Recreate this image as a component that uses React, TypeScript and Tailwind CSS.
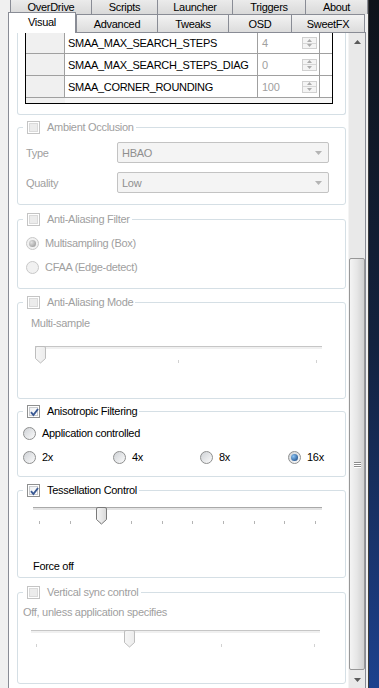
import React from 'react';

const DIS = 'text-[#a0a0a0]';

type Opt = { checked?: boolean; disabled?: boolean };

const Check = ({ checked = false, disabled = false }: Opt) => (
  <span
    className={`relative flex h-[13px] w-[13px] shrink-0 items-center justify-center border bg-white ${
      disabled ? 'border-[#c4c4c4]' : 'border-[#8e8f8f]'
    }`}
  >
    <span
      className={`h-[9px] w-[9px] border ${
        disabled
          ? 'border-[#dadada] bg-[#ececec]'
          : checked
          ? 'border-[#c9cbce] bg-gradient-to-br from-[#eef0f2] to-white'
          : 'border-[#b5b7ba] bg-gradient-to-br from-[#dcdee1] to-[#fafafa]'
      }`}
    />
    {checked && (
      <svg className="absolute left-[1px] top-[1px]" width="11" height="11" viewBox="0 0 11 11">
        <path d="M2 5.2 L4.4 8 L9 2" fill="none" stroke="#3b5a94" strokeWidth="1.9" />
      </svg>
    )}
  </span>
);

const Radio = ({ checked = false, disabled = false }: Opt) => (
  <span
    className={`flex h-[13px] w-[13px] shrink-0 items-center justify-center rounded-full border ${
      disabled
        ? 'border-[#c8c8c8] bg-[#f1f1f1]'
        : 'border-[#8e8f8f] bg-gradient-to-br from-[#cfd2d6] to-[#fbfbfb]'
    }`}
  >
    {checked && (
      <span
        className={`h-[7px] w-[7px] rounded-full ${
          disabled
            ? 'bg-[radial-gradient(circle_at_35%_35%,#e2e2e2,#8e8e8e)]'
            : 'bg-[radial-gradient(circle_at_35%_35%,#8cc4f4,#0b3a78)]'
        }`}
      />
    )}
  </span>
);

const Combo = ({ value }: { value: string }) => (
  <div className="flex h-[21px] w-[212px] items-center justify-between rounded-[2px] border border-[#c3c3c3] bg-[#f4f4f4] pl-[4px] pr-[6px] text-[#8f8f8f]">
    <span>{value}</span>
    <svg width="7" height="4" viewBox="0 0 7 4">
      <path d="M0 0H7L3.5 4Z" fill="#b4b4b4" />
    </svg>
  </div>
);

const Spin = () => (
  <div className="flex h-[12px] w-[15px] flex-col border border-[#d0d0d0] bg-[#f4f4f4]">
    <div className="flex flex-1 items-center justify-center border-b border-[#d6d6d6]">
      <svg width="5" height="3" viewBox="0 0 5 3">
        <path d="M0 3H5L2.5 0Z" fill="#ababab" />
      </svg>
    </div>
    <div className="flex flex-1 items-center justify-center">
      <svg width="5" height="3" viewBox="0 0 5 3">
        <path d="M0 0H5L2.5 3Z" fill="#ababab" />
      </svg>
    </div>
  </div>
);

type SliderProps = {
  width: number;
  cls: string;
  value: number;
  steps: number;
  pad: number;
  disabled?: boolean;
};

// thumb is placed from the value, ticks spread between the pads
const Slider = ({ width, cls, value, steps, pad, disabled = false }: SliderProps) => {
  const left = pad + ((width - 2 * pad) * value) / (steps - 1) - 5;
  return (
    <div className={`relative h-[23px] ${cls}`}>
      <div
        className={`mt-[6px] h-[3px] border-t ${
          disabled ? 'border-[#c6c6c6] bg-[#f0f0f0]' : 'border-[#a9a9a9] bg-[#e4e4e4]'
        }`}
      />
      <div className="mt-[11px] flex h-[3px] justify-between" style={{ paddingLeft: pad, paddingRight: pad }}>
        {Array.from({ length: steps }).map((_, i) => (
          <span key={i} className={`w-[1px] ${disabled ? 'bg-[#d2d2d2]' : 'bg-[#b4b4b4]'}`} />
        ))}
      </div>
      <svg className="absolute top-0" style={{ left }} width="11" height="18" viewBox="0 0 11 18">
        <defs>
          <linearGradient id={disabled ? 'thd' : 'the'} x1="0" y1="0" x2="1" y2="0">
            <stop offset="0" stopColor={disabled ? '#f6f6f6' : '#f7f7f7'} />
            <stop offset="1" stopColor={disabled ? '#ececec' : '#d9d9d9'} />
          </linearGradient>
        </defs>
        <path
          d="M0.5 2 Q0.5 0.5 2 0.5 H9 Q10.5 0.5 10.5 2 V12.5 L5.5 17 L0.5 12.5 Z"
          fill={`url(#${disabled ? 'thd' : 'the'})`}
          stroke={disabled ? '#bdbdbd' : '#7a7a7a'}
        />
      </svg>
    </div>
  );
};

type GroupProps = {
  title: string;
  checked?: boolean;
  disabled?: boolean;
  cls: string;
  children?: React.ReactNode;
};

const Group = ({ title, checked = false, disabled = false, cls, children }: GroupProps) => (
  <div className={`ml-[8px] w-[329px] shrink-0 rounded-[3px] border border-[#d5dfe5] ${cls}`}>
    <div
      className={`-mt-[8px] ml-[5px] flex h-[14px] w-fit items-center gap-[7px] bg-white pl-[4px] pr-[2px] ${
        disabled ? DIS : 'text-black'
      }`}
    >
      <Check checked={checked} disabled={disabled} />
      <span>{title}</span>
    </div>
    {children}
  </div>
);

const rows = [
  { name: 'SMAA_MAX_SEARCH_STEPS', value: '4', h: 'h-[21px]' },
  { name: 'SMAA_MAX_SEARCH_STEPS_DIAG', value: '0', h: 'h-[22px]' },
  { name: 'SMAA_CORNER_ROUNDING', value: '100', h: 'h-[22px]' },
];

const tabsTop = [
  { label: 'OverDrive', w: 'w-[81px]' },
  { label: 'Scripts', w: 'w-[66px]' },
  { label: 'Launcher', w: 'w-[75px]' },
  { label: 'Triggers', w: 'w-[73px]' },
  { label: 'About', w: 'w-[63px] border-r' },
];

const tabsBottom = [
  { label: 'Advanced', w: 'w-[81px]' },
  { label: 'Tweaks', w: 'w-[71px]' },
  { label: 'OSD', w: 'w-[63px]' },
  { label: 'SweetFX', w: 'w-[74px] border-r' },
];

export default function App() {
  return (
    <div className="flex h-[688px] w-[379px] overflow-hidden bg-[#f0f0f0] font-['Liberation_Sans',Arial,sans-serif] text-[11px] leading-[14px] tracking-[-0.3px] text-black">
      <div className="flex w-[368px] shrink-0 flex-col">
        {/* Tabs, back row */}
        <div className="flex h-[14px] shrink-0 pl-[10px]">
          {tabsTop.map((t) => (
            <div
              key={t.label}
              className={`flex h-full items-center justify-center border-l border-[#898c95] bg-gradient-to-b from-[#ebebeb] to-[#d9d9d9] pb-[1px] ${t.w}`}
            >
              {t.label}
            </div>
          ))}
        </div>

        {/* Tabs, front row */}
        <div className="flex h-[18px] shrink-0 items-start pl-[8px]">
          <div className="relative z-10 -mt-[2px] flex h-[21px] w-[68px] items-center justify-center border-x border-t border-[#898c95] bg-white pb-[2px]">
            Visual
          </div>
          {tabsBottom.map((t) => (
            <div
              key={t.label}
              className={`flex h-full items-center justify-center border-l border-t border-[#898c95] bg-gradient-to-b from-[#f3f3f3] to-[#dcdcdc] ${t.w}`}
            >
              {t.label}
            </div>
          ))}
        </div>

        {/* Tab page */}
        <div className="ml-[8px] flex w-[358px] flex-1 border-x border-t border-[#898c95] bg-white">
          <div className="flex w-[339px] flex-col overflow-hidden">
            {/* SMAA parameter grid (scrolled) */}
            <div className="ml-[8px] h-[82px] w-[329px] shrink-0 rounded-b-[3px] border-x border-b border-[#d5dfe5] pl-[7px]">
              <div className="h-[71px] w-[308px] border-x border-b border-black bg-[#f7f7f7]">
                {rows.map((r) => (
                  <div key={r.name} className={`flex border-b border-[#a0a0a0] ${r.h}`}>
                    <div className="w-[39px] border-r border-[#a0a0a0] bg-[#f0f0f0]" />
                    <div className="flex w-[193px] items-center border-r border-[#a0a0a0] bg-white pl-[3px]">
                      {r.name}
                    </div>
                    <div className="flex w-[62px] items-center justify-between border-r border-[#a0a0a0] bg-white pl-[4px] pr-[2px] text-[#a0a0a0]">
                      <span>{r.value}</span>
                      <Spin />
                    </div>
                    <div className="flex-1 bg-white" />
                  </div>
                ))}
                <div className="flex h-[5px]">
                  <div className="w-[39px] bg-[#f0f0f0]" />
                </div>
              </div>
            </div>

            <Group title="Ambient Occlusion" disabled cls="mt-[12px] h-[78px]">
              <div className={`mt-[8px] flex items-center pl-[8px] ${DIS}`}>
                <span className="w-[91px]">Type</span>
                <Combo value="HBAO" />
              </div>
              <div className={`mt-[9px] flex items-center pl-[8px] ${DIS}`}>
                <span className="w-[91px]">Quality</span>
                <Combo value="Low" />
              </div>
            </Group>

            <Group title="Anti-Aliasing Filter" disabled cls="mt-[14px] h-[70px]">
              <div className={`mt-[9px] flex h-[16px] items-center gap-[6px] pl-[8px] ${DIS}`}>
                <Radio checked disabled />
                <span>Multisampling (Box)</span>
              </div>
              <div className={`mt-[8px] flex h-[16px] items-center gap-[6px] pl-[8px] ${DIS}`}>
                <Radio disabled />
                <span>CFAA (Edge-detect)</span>
              </div>
            </Group>

            <Group title="Anti-Aliasing Mode" disabled cls="mt-[13px] h-[97px]">
              <div className={`mt-[7px] pl-[13px] ${DIS}`}>Multi-sample</div>
              <div className="mt-[16px] pl-[17px]">
                <Slider width={287} cls="w-[287px]" value={0} steps={3} pad={5} disabled />
              </div>
            </Group>

            <Group title="Anisotropic Filtering" checked cls="mt-[12px] h-[66px]">
              <div className="mt-[7px] flex h-[16px] items-center gap-[6px] pl-[5px]">
                <Radio />
                <span>Application controlled</span>
              </div>
              <div className="mt-[8px] flex h-[16px] items-center pl-[5px]">
                <div className="flex w-[90px] items-center gap-[6px]">
                  <Radio />
                  <span>2x</span>
                </div>
                <div className="flex w-[87px] items-center gap-[6px]">
                  <Radio />
                  <span>4x</span>
                </div>
                <div className="flex w-[88px] items-center gap-[6px]">
                  <Radio />
                  <span>8x</span>
                </div>
                <div className="flex items-center gap-[6px]">
                  <Radio checked />
                  <span>16x</span>
                </div>
              </div>
            </Group>

            <Group title="Tessellation Control" checked cls="mt-[13px] h-[88px]">
              <div className="mt-[10px] pl-[15px]">
                <Slider width={289} cls="w-[289px]" value={2} steps={10} pad={6} />
              </div>
              <div className="mt-[29px] pl-[15px]">Force off</div>
            </Group>

            <Group title="Vertical sync control" disabled cls="mt-[14px] h-[92px]">
              <div className={`mt-[6px] pl-[5px] ${DIS}`}>Off, unless application specifies</div>
              <div className="mt-[11px] pl-[13px]">
                <Slider width={289} cls="w-[289px]" value={1} steps={4} pad={5} disabled />
              </div>
            </Group>
          </div>

          {/* Scrollbar */}
          <div className="flex w-[17px] flex-col border-l border-[#f4f4f4] bg-[#e9e9e9]">
            <div className="flex h-[17px] shrink-0 items-center justify-center">
              <svg width="7" height="4" viewBox="0 0 7 4">
                <path d="M0 4H7L3.5 0Z" fill="#5a5a5a" />
              </svg>
            </div>
            <div className="h-[208px] shrink-0" />
            <div className="flex h-[412px] shrink-0 flex-col items-center justify-center gap-[1px] rounded-[2px] border border-[#979797] bg-gradient-to-r from-[#f4f4f4] via-[#e6e6e6] to-[#d0d0d0]">
              {[0, 1, 2].map((i) => (
                <span key={i} className="h-[1px] w-[7px] bg-[#8c8c8c] shadow-[0_1px_0_#ffffff]" />
              ))}
            </div>
            <div className="flex-1" />
            <div className="flex h-[17px] shrink-0 items-center justify-center">
              <svg width="7" height="4" viewBox="0 0 7 4">
                <path d="M0 0H7L3.5 4Z" fill="#5a5a5a" />
              </svg>
            </div>
          </div>
        </div>
      </div>

      {/* Desktop behind the window */}
      <div className="w-[11px] shrink-0 border-l border-[#3a3a3a] bg-gradient-to-b from-[#0f131a] via-[#13223f] to-[#1d418e]" />
    </div>
  );
}
